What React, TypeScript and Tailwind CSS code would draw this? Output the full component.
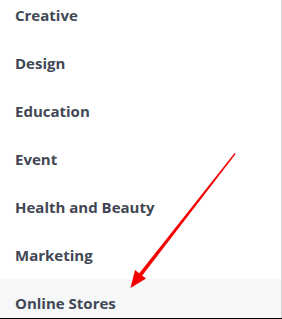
import React from "react";

const categories = ["Creative", "Design", "Education", "Event", "Health and Beauty", "Marketing", "Online Stores"];

function CategoryList() {
  return (
    <div className="mt-[-9px]">
      {categories.map((name, i) => (
        <div
          key={name}
          className={`h-12 flex items-center pl-[15px] ${i === categories.length - 1 ? "bg-[#f6f7f9]" : "bg-white"}`}
        >
          <span className="font-['Open_Sans',sans-serif] font-bold text-[15px] text-[#414754]">{name}</span>
        </div>
      ))}
    </div>
  );
}

export default function App() {
  return (
    <div className="relative w-[282px] h-[319px] overflow-hidden bg-white">
      <div className="h-[318px] overflow-hidden border-r border-[#d4d4d4]">
        <CategoryList />
      </div>
      <div className="h-px bg-black" />
      {/* red annotation arrow */}
      <svg className="absolute left-0 top-0" width="282" height="319" viewBox="0 0 282 319">
        <polygon points="234.6,153 235.6,154 141.5,276.5 138.5,274.2" fill="#f40000" />
        <polygon points="130.5,288 146,278.5 135,270" fill="#f40000" />
      </svg>
    </div>
  );
}
